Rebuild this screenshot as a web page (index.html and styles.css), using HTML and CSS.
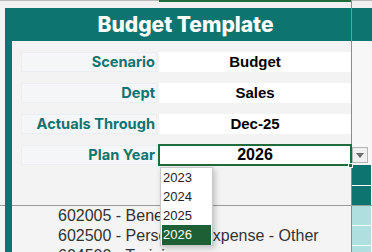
FILE: index.html
```html
<!DOCTYPE html>
<html lang="en">

<head>
    <meta charset="UTF-8">
    <meta name="viewport" content="width=device-width, initial-scale=1.0">
    <title>Budget Template</title>
    <link rel="stylesheet" href="styles.css">
</head>

<body>
    <div class="topbar">
        <div class="top-cell top-label"></div>
        <div class="top-cell top-value"></div>
        <div class="top-cell top-side"></div>
    </div>

    <div class="sheet">
        <div class="band band-title">
            <div class="main title">Budget Template</div>
            <div class="side side-teal"></div>
        </div>

        <div class="band band-params">
            <div class="main params">
                <div class="param-row">
                    <div class="param-label">Scenario</div>
                    <div class="param-value">Budget</div>
                </div>
                <div class="param-row">
                    <div class="param-label">Dept</div>
                    <div class="param-value">Sales</div>
                </div>
                <div class="param-row">
                    <div class="param-label">Actuals Through</div>
                    <div class="param-value">Dec-25</div>
                </div>
                <div class="param-row">
                    <div class="param-label">Plan Year</div>
                    <div class="param-value is-selected">
                        <span class="year">2026</span>
                        <span class="fill-handle"></span>
                        <ul class="year-list">
                            <li>2023</li>
                            <li>2024</li>
                            <li>2025</li>
                            <li class="active">2026</li>
                        </ul>
                    </div>
                </div>
            </div>
            <div class="side side-params">
                <div class="dd-button">
                    <svg width="8" height="5" viewBox="0 0 8 5">
                        <path d="M0 0 H8 L4 5 Z" fill="#6b6b6b" />
                    </svg>
                </div>
                <div class="teal-stack">
                    <div class="teal-cell"></div>
                    <div class="teal-cell"></div>
                </div>
            </div>
        </div>
    </div>

    <div class="rule"></div>

    <div class="sheet">
        <div class="band band-list">
            <div class="main lines">
                <div class="line">602005 - Benefits</div>
                <div class="line">602500 - Personnel Expense - Other</div>
                <div class="line">604500 - Training</div>
            </div>
            <div class="side side-cyan">
                <div class="cyan-cell"></div>
                <div class="cyan-cell"></div>
                <div class="cyan-cell"></div>
            </div>
        </div>
    </div>
</body>
</html>
```

FILE: styles.css
```css
* {
    box-sizing: border-box;
}

body {
    margin: 0;
    width: 372px;
    height: 252px;
    overflow: hidden;
    background-color: #f4f4f4;
    font-family: "Liberation Sans", Arial, sans-serif;
}

/* strip of the row above the sheet */
.topbar {
    display: flex;
    height: 8px;
    background-color: #f1f1f1;
}

.top-cell {
    border-top: 1px solid #b9b9b9;
}

.top-label {
    width: 159px;
}

.top-value {
    width: 192px;
    border-top: 2px solid #1f6b3c;
}

.top-side {
    flex: 1;
    border-left: 1px solid #8c8c8c;
}

.sheet {
    margin-left: 5px;
    border-left: 7px solid #0e7470;
}

.band {
    display: flex;
}

.main {
    width: 339px;
}

.side {
    width: 20px;
    border-left: 1px solid #8c8c8c;
}

/* title */
.band-title {
    height: 33px;
    background-color: #0e7470;
}

.title {
    padding-left: 8px;
    text-align: center;
    color: #fff;
    font-family: Inter, "Liberation Sans", sans-serif;
    font-weight: 800;
    font-size: 21px;
    line-height: 33px;
}

/* parameter block */
.band-params {
    height: 164px;
}

.params {
    display: flex;
    flex-direction: column;
    gap: 11px;
    padding-top: 11px;
    background-color: #f3f3f3;
}

.param-row {
    display: flex;
    height: 20px;
}

.param-label {
    width: 136px;
    margin-left: 9px;
    margin-right: 2px;
    padding-right: 1px;
    border: 1px solid #eaeef2;
    background-color: #f5f6f7;
    text-align: right;
    color: #0e7470;
    font-family: Inter, "Liberation Sans", sans-serif;
    font-weight: 700;
    font-size: 14.6px;
    line-height: 18px;
    white-space: nowrap;
}

.param-value {
    position: relative;
    flex: 1;
    background-color: #fff;
    text-align: center;
    font-weight: 700;
    font-size: 15px;
    line-height: 20px;
    color: #000;
}

.param-value.is-selected {
    outline: 2px solid #1f6b3c;
    outline-offset: -1px;
}

.year {
    font-size: 16px;
}

.fill-handle {
    position: absolute;
    right: -2px;
    bottom: -3px;
    width: 5px;
    height: 5px;
    background-color: #1f6b3c;
    border: 1px solid #fff;
}

.year-list {
    position: absolute;
    z-index: 2;
    top: 22px;
    left: 1px;
    width: 53px;
    margin: 0;
    padding: 0;
    list-style: none;
    background-color: #fff;
    border: 1px solid #c9c9c9;
    box-shadow: 2px 2px 6px rgba(0, 0, 0, 0.22);
    text-align: left;
}

.year-list li {
    height: 19px;
    padding-left: 2px;
    font-weight: 400;
    font-size: 13px;
    line-height: 19px;
    color: #222;
}

.year-list li.active {
    height: 20px;
    margin: 0 1px;
    padding-left: 1px;
    background-color: #1f5f35;
    color: #fff;
}

.side-params {
    display: flex;
    flex-direction: column;
    background-color: #f7f7f7;
}

.dd-button {
    display: flex;
    align-items: center;
    justify-content: center;
    width: 16px;
    height: 16px;
    margin-top: 106px;
    background-color: #f0f0f0;
    border: 1px solid #b5b5b5;
}

.teal-stack {
    display: flex;
    flex-direction: column;
    gap: 1px;
    height: 40px;
    margin-top: auto;
    background-color: #fff;
}

.teal-cell {
    flex: 1;
    background-color: #0e7470;
}

/* gridline under the parameter block */
.rule {
    height: 1px;
    background: linear-gradient(to right, #9a9a9a 5px, #0e7470 5px 12px, #9a9a9a 12px);
}

/* account lines */
.lines {
    padding-left: 46px;
    background-color: #f4f4f4;
}

.line {
    height: 20px;
    font-size: 16px;
    line-height: 20px;
    color: #333;
    white-space: nowrap;
}

.side-cyan {
    display: flex;
    flex-direction: column;
    gap: 1px;
    height: 46px;
    background-color: #fff;
}

.cyan-cell {
    height: 19px;
    flex-shrink: 0;
    background-color: #afdfdf;
}
```
